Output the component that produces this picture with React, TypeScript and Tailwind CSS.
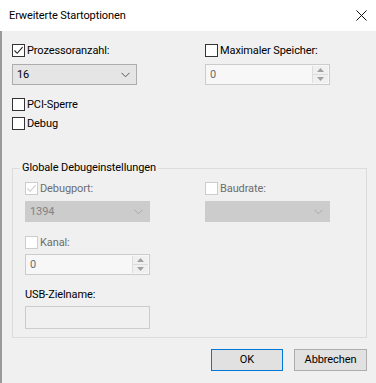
import React from 'react';

type CheckProps = {
    label: string;
    checked?: boolean;
    disabled?: boolean;
};

const CheckBox: React.FC<CheckProps> = ({ label, checked, disabled }) => {
    return (
        <div className="flex items-center h-[13px]">
            <div
                className={`w-[13px] h-[13px] shrink-0 border bg-white flex items-center justify-center ${disabled ? 'border-[#cccccc]' : 'border-[#333333]'}`}
            >
                {checked && (
                    <svg width="11" height="11" viewBox="0 0 11 11">
                        <path
                            d="M1.5 5.5 L4.2 8.3 L9.6 2.2"
                            fill="none"
                            stroke={disabled ? '#cccccc' : '#222222'}
                            strokeWidth="1.1"
                        />
                    </svg>
                )}
            </div>
            <span className={`ml-[2px] leading-[14px] ${disabled ? 'text-[#6d6d6d]' : 'text-black'}`}>{label}</span>
        </div>
    );
};

const Chevron: React.FC<{ color: string }> = ({ color }) => (
    <svg width="9" height="6" viewBox="0 0 9 6">
        <path d="M0.5 0.8 L4.5 4.8 L8.5 0.8" fill="none" stroke={color} strokeWidth="1" />
    </svg>
);

const Select: React.FC<{ value?: string; disabled?: boolean }> = ({ value, disabled }) => {
    return (
        <div
            className={`w-[125px] h-[21px] border flex items-center justify-between pl-[4px] pr-[6px] ${disabled ? 'bg-[#cccccc] border-[#cccccc] text-[#838383]' : 'bg-[#e5e5e5] border-[#adadad] text-black'}`}
        >
            <span className="leading-[14px]">{value}</span>
            <Chevron color={disabled ? '#a8a8a8' : '#555555'} />
        </div>
    );
};

const SpinBox: React.FC<{ value: string }> = ({ value }) => {
    return (
        <div className="w-[125px] h-[21px] border border-[#cccccc] bg-[#f7f7f7] flex">
            <div className="flex-1 flex items-center pl-[4px] text-[#6d6d6d] leading-[14px]">{value}</div>
            <div className="w-[16px] flex flex-col border-l border-[#dddddd] my-[1px] mr-[1px]">
                <div className="flex-1 flex items-center justify-center bg-[#f0f0f0] border-b border-[#dddddd]">
                    <svg width="7" height="4" viewBox="0 0 7 4">
                        <path d="M0 4 L3.5 0 L7 4 Z" fill="#a0a0a0" />
                    </svg>
                </div>
                <div className="flex-1 flex items-center justify-center bg-[#f0f0f0]">
                    <svg width="7" height="4" viewBox="0 0 7 4">
                        <path d="M0 0 L3.5 4 L7 0 Z" fill="#a0a0a0" />
                    </svg>
                </div>
            </div>
        </div>
    );
};

const App: React.FC = () => {
    return (
        <div
            className="w-[376px] h-[383px] bg-[#f0f0f0] flex flex-col text-[11px] tracking-[-0.1px] text-black overflow-hidden"
            style={{ fontFamily: 'Roboto, "Noto Sans", sans-serif' }}
        >
            {/* title bar */}
            <div className="h-[31px] bg-white flex items-center justify-between pl-[9px] pr-[9px] shrink-0">
                <span className="leading-[16px]">Erweiterte Startoptionen</span>
                <svg width="11" height="11" viewBox="0 0 11 11">
                    <path d="M0.5 0.5 L10.5 10.5 M10.5 0.5 L0.5 10.5" stroke="#111111" strokeWidth="1" />
                </svg>
            </div>

            <div className="flex-1 border-l-2 border-[#9a9a9a] pl-[10px] pt-[13px] flex flex-col">
                <div className="flex">
                    <div className="w-[193px] flex flex-col">
                        <CheckBox label="Prozessoranzahl:" checked />
                        <div className="mt-[7px]">
                            <Select value="16" />
                        </div>
                        <div className="mt-[13px]">
                            <CheckBox label="PCI-Sperre" />
                        </div>
                        <div className="mt-[6px]">
                            <CheckBox label="Debug" />
                        </div>
                    </div>
                    <div className="flex flex-col">
                        <CheckBox label="Maximaler Speicher:" />
                        <div className="mt-[7px]">
                            <SpinBox value="0" />
                        </div>
                    </div>
                </div>

                <fieldset className="mt-[31px] w-[355px] border border-[#dcdcdc] pl-[12px] pt-[7px] pb-[8px]">
                    <legend className="ml-[-5px] px-[2px] leading-[14px]">Globale Debugeinstellungen</legend>
                    <div className="flex">
                        <div className="w-[180px] flex flex-col">
                            <CheckBox label="Debugport:" checked disabled />
                            <div className="mt-[6px]">
                                <Select value="1394" disabled />
                            </div>
                            <div className="mt-[14px]">
                                <CheckBox label="Kanal:" disabled />
                            </div>
                            <div className="mt-[5px]">
                                <SpinBox value="0" />
                            </div>
                            <div className="mt-[13px] leading-[14px]">USB-Zielname:</div>
                            <div className="mt-[4px] w-[125px] h-[23px] border border-[#cccccc] bg-[#f0f0f0]" />
                        </div>
                        <div className="flex flex-col">
                            <CheckBox label="Baudrate:" disabled />
                            <div className="mt-[6px]">
                                <Select disabled />
                            </div>
                        </div>
                    </div>
                </fieldset>

                <div className="mt-[11px] flex justify-end gap-[11px] pr-[9px]">
                    <button className="w-[72px] h-[22px] bg-[#e1e1e1] border border-[#0078d7] leading-[14px]">OK</button>
                    <button className="w-[73px] h-[22px] bg-[#e1e1e1] border border-[#adadad] leading-[14px]">Abbrechen</button>
                </div>
            </div>
        </div>
    );
};

export default App;
